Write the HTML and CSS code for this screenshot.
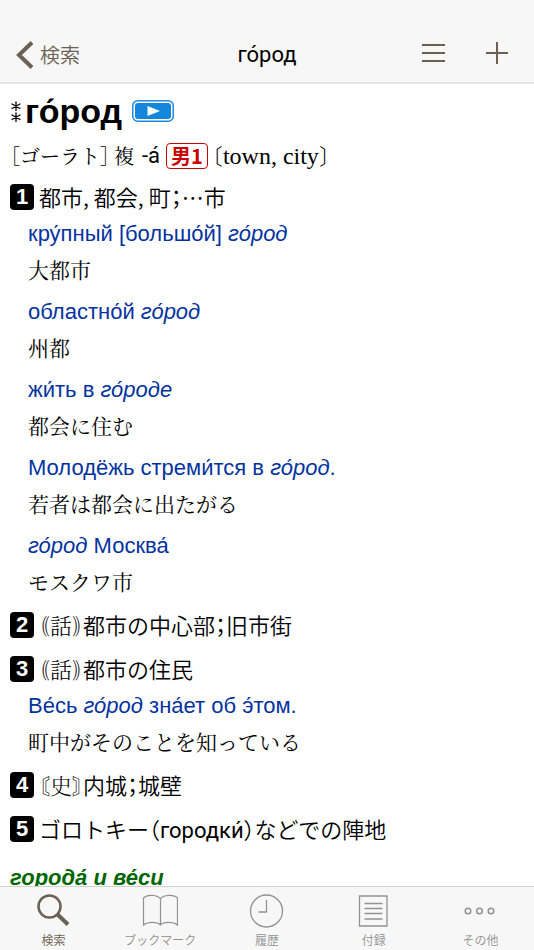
FILE: index.html
```html
<!DOCTYPE html>
<html lang="ja">
<head>
<meta charset="utf-8">
<meta name="viewport" content="width=device-width, initial-scale=1">
<title>го́род</title>
<link rel="stylesheet" href="styles.css">
</head>
<body>
<header class="navbar">
  <a class="back" href="#search">
    <svg width="18" height="28" viewBox="0 0 18 28" fill="none" stroke="currentColor" stroke-width="4"><path d="M16 1.500 3 14l13 12.500"/></svg>
    <span>検索</span>
  </a>
  <h1 class="title">го́род</h1>
  <div class="actions">
    <button type="button" aria-label="メニュー">
      <svg width="24" height="24" viewBox="0 0 24 24" fill="none" stroke="currentColor" stroke-width="1.800"><path d="M0 4h23M0 12h23M0 20h23"/></svg>
    </button>
    <button type="button" aria-label="追加">
      <svg width="24" height="24" viewBox="0 0 24 24" fill="none" stroke="currentColor" stroke-width="2"><path d="M0 12h22M11 1v22"/></svg>
    </button>
  </div>
</header>

<main class="entry">
  <div class="headword">
    <svg class="stars" width="12" height="24" viewBox="0 0 12 24" fill="none" stroke="currentColor" stroke-width="1.300" stroke-linecap="round"><path d="M6 3v8.500M2 5l8 4.500M10 5l-8 4.500M6 14v8.500M2 16l8 4.500M10 16l-8 4.500"/></svg>
    <h2 lang="ru">го́род</h2>
    <button class="play" type="button" aria-label="発音を再生">
      <svg width="42" height="22" viewBox="0 0 42 22"><rect x=".75" y=".75" width="40.500" height="20.500" rx="5" fill="#fff" stroke="#1a8be0" stroke-width="1.500"/><rect x="3" y="3" width="36" height="16" rx="3" fill="#1487dc"/><path d="M15.500 6v10L28 11z" fill="#fff"/></svg>
    </button>
  </div>
  <p class="pron"><span class="kana">［ゴーラト］</span><span class="kana">複</span><span class="ending" lang="ru">-а́</span><span class="tag">男1</span><span class="gloss" lang="en"><span class="half">〔</span>town, city<span class="half">〕</span></span></p>

  <section>
    <p class="sense"><b class="num">1</b><span>都市, 都会, 町；…市</span></p>
    <dl class="examples">
      <div><dt lang="ru">кру́пный [большо́й] <i>го́род</i></dt><dd>大都市</dd></div>
      <div><dt lang="ru">областно́й <i>го́род</i></dt><dd>州都</dd></div>
      <div><dt lang="ru">жи́ть в <i>го́роде</i></dt><dd>都会に住む</dd></div>
      <div><dt lang="ru">Молодёжь стреми́тся в <i>го́род</i>.</dt><dd>若者は都会に出たがる</dd></div>
      <div><dt lang="ru"><i>го́род</i> Москва́</dt><dd>モスクワ市</dd></div>
    </dl>
  </section>
  <section>
    <p class="sense"><b class="num">2</b><span><span class="label">｟話｠</span>都市の中心部；旧市街</span></p>
  </section>
  <section>
    <p class="sense"><b class="num">3</b><span><span class="label">｟話｠</span>都市の住民</span></p>
    <dl class="examples">
      <div><dt lang="ru">Ве́сь <i>го́род</i> зна́ет об э́том.</dt><dd>町中がそのことを知っている</dd></div>
    </dl>
  </section>
  <section>
    <p class="sense"><b class="num">4</b><span><span class="label">〘史〙</span>内城；城壁</span></p>
  </section>
  <section>
    <p class="sense"><b class="num">5</b><span>ゴロトキー（<span class="ru" lang="ru">городки́</span>）などでの陣地</span></p>
  </section>
  <h3 class="idiom" lang="ru">города́ и ве́си</h3>
</main>

<nav class="tabs">
  <a class="tab active" href="#search">
    <svg width="36" height="36" viewBox="0 0 36 36" fill="none" stroke="currentColor"><circle cx="14.500" cy="13.500" r="11" stroke-width="2.500"/><path d="m22 21 11 10.500" stroke-width="4"/></svg>
    <span>検索</span>
  </a>
  <a class="tab" href="#bookmarks">
    <svg width="36" height="36" viewBox="0 0 36 36" fill="none" stroke="currentColor" stroke-width="1.200"><path d="M18.500 6C16 1.500 5 1 1.500 5v27c4-3.500 14-3.500 17 0 3-3.500 13-3.500 17 0V5C32 1 21 1.500 18.500 6zV32"/></svg>
    <span>ブックマーク</span>
  </a>
  <a class="tab" href="#history">
    <svg width="36" height="36" viewBox="0 0 36 36" fill="none" stroke="currentColor" stroke-width="1.300"><circle cx="17.500" cy="18" r="16"/><path d="M17.500 7v12h-8"/></svg>
    <span>履歴</span>
  </a>
  <a class="tab" href="#appendix">
    <svg width="36" height="36" viewBox="0 0 36 36" fill="none" stroke="currentColor" stroke-width="1.300"><path d="M3.500 3h27.500v30h-27.500zM8.500 10.500h18M8.500 15.500h18M8.500 20.500h18M8.500 26h18"/></svg>
    <span>付録</span>
  </a>
  <a class="tab" href="#more">
    <svg width="36" height="36" viewBox="0 0 36 36" fill="none" stroke="currentColor" stroke-width="1.500"><circle cx="5" cy="18" r="2.800"/><circle cx="16.500" cy="18" r="2.800"/><circle cx="28" cy="18" r="2.800"/></svg>
    <span>その他</span>
  </a>
</nav>
</body>
</html>
```
FILE: styles.css
```css
* { box-sizing: border-box; }

body {
  margin: 0;
  height: 100vh;
  display: grid;
  grid-template-rows: auto minmax(0, 1fr) auto;
  background: #fff;
  color: #000;
  font-family: "Liberation Sans", "Noto Sans CJK JP", sans-serif;
}

h1, h2, h3, p, dl, dd { margin: 0; }
a { color: inherit; text-decoration: none; }
svg { display: block; }

button {
  padding: 0;
  border: 0;
  background: none;
  color: inherit;
}

.navbar {
  display: grid;
  grid-template-columns: 1fr auto 1fr;
  align-items: center;
  padding: 28px 24px 0;
  height: 84px;
  background: #f7f7f7;
  border-bottom: 2px solid #e6e6e6;
  color: #6b6152;
}

.back {
  display: flex;
  align-items: center;
  gap: 6px;
  margin-left: -8px;
  font-family: "Noto Sans CJK JP", sans-serif;
  font-size: 20px;
  font-weight: 350;
  line-height: 28px;
}

.title {
  color: #000;
  font: 400 22px/28px Roboto, sans-serif;
}

.actions {
  display: flex;
  justify-content: flex-end;
  gap: 40px;
  padding-bottom: 4px;
}

.entry {
  overflow: hidden;
  padding: 4px 10px 0;
}

.headword {
  display: flex;
  align-items: center;
  height: 46px;
}

.headword h2 {
  margin: 0 10px 0 3px;
  font-size: 34px;
  line-height: 44px;
}

.pron {
  display: flex;
  align-items: center;
  gap: 4px;
  height: 36px;
  margin: 4px 0 6px;
}

.kana {
  font: 400 20px/36px "Noto Serif CJK JP", "Noto Sans CJK JP", serif;
  font-feature-settings: "halt";
}

.ending {
  margin: 0 2px 0 4px;
  font: 400 22px/36px Roboto, sans-serif;
}

.tag {
  padding: 0 4px;
  border: 1px solid #c00;
  border-radius: 4px;
  color: #c00;
  font: 700 20px/24px "Noto Sans CJK JP", sans-serif;
}

.gloss {
  font: 400 24px/36px "Liberation Serif", "Noto Sans CJK JP", serif;
}

.half {
  font-size: 22px;
  font-weight: 300;
  line-height: 1;
  font-feature-settings: "halt";
}

.sense {
  display: flex;
  align-items: flex-start;
  gap: 5px;
  height: 36px;
  font: 350 22px/32px "Noto Sans CJK JP", sans-serif;
  font-feature-settings: "halt";
}

section + section { margin-top: 8px; }

.num {
  width: 24px;
  margin-top: 4px;
  border-radius: 4px;
  background: #000;
  color: #fff;
  font: 700 22px/26px "Liberation Sans", sans-serif;
  text-align: center;
}

.label {
  font-family: "Noto Serif CJK JP", "Noto Sans CJK JP", serif;
  line-height: 1;
}

.ru {
  font-family: Roboto, sans-serif;
  font-weight: 400;
  line-height: 1;
}

.examples {
  display: grid;
  gap: 8px;
  padding: 0 0 2px 18px;
}

dt {
  color: #0433a0;
  font-size: 22px;
  line-height: 36px;
}

dd {
  font: 400 21px/34px "Noto Serif CJK JP", "Noto Sans CJK JP", serif;
}

.idiom {
  margin-top: 12px;
  color: #060;
  font-size: 22px;
  font-style: italic;
  line-height: 36px;
}

.tabs {
  display: grid;
  grid-template-columns: repeat(5, 1fr);
  height: 64px;
  padding-top: 6px;
  background: #f7f7f7;
  border-top: 1px solid #d2d2d2;
  color: #929292;
}

.tab {
  display: flex;
  flex-direction: column;
  align-items: center;
  font: 350 12px/22px "Noto Sans CJK JP", sans-serif;
}

.active { color: #6b6152; }
```
